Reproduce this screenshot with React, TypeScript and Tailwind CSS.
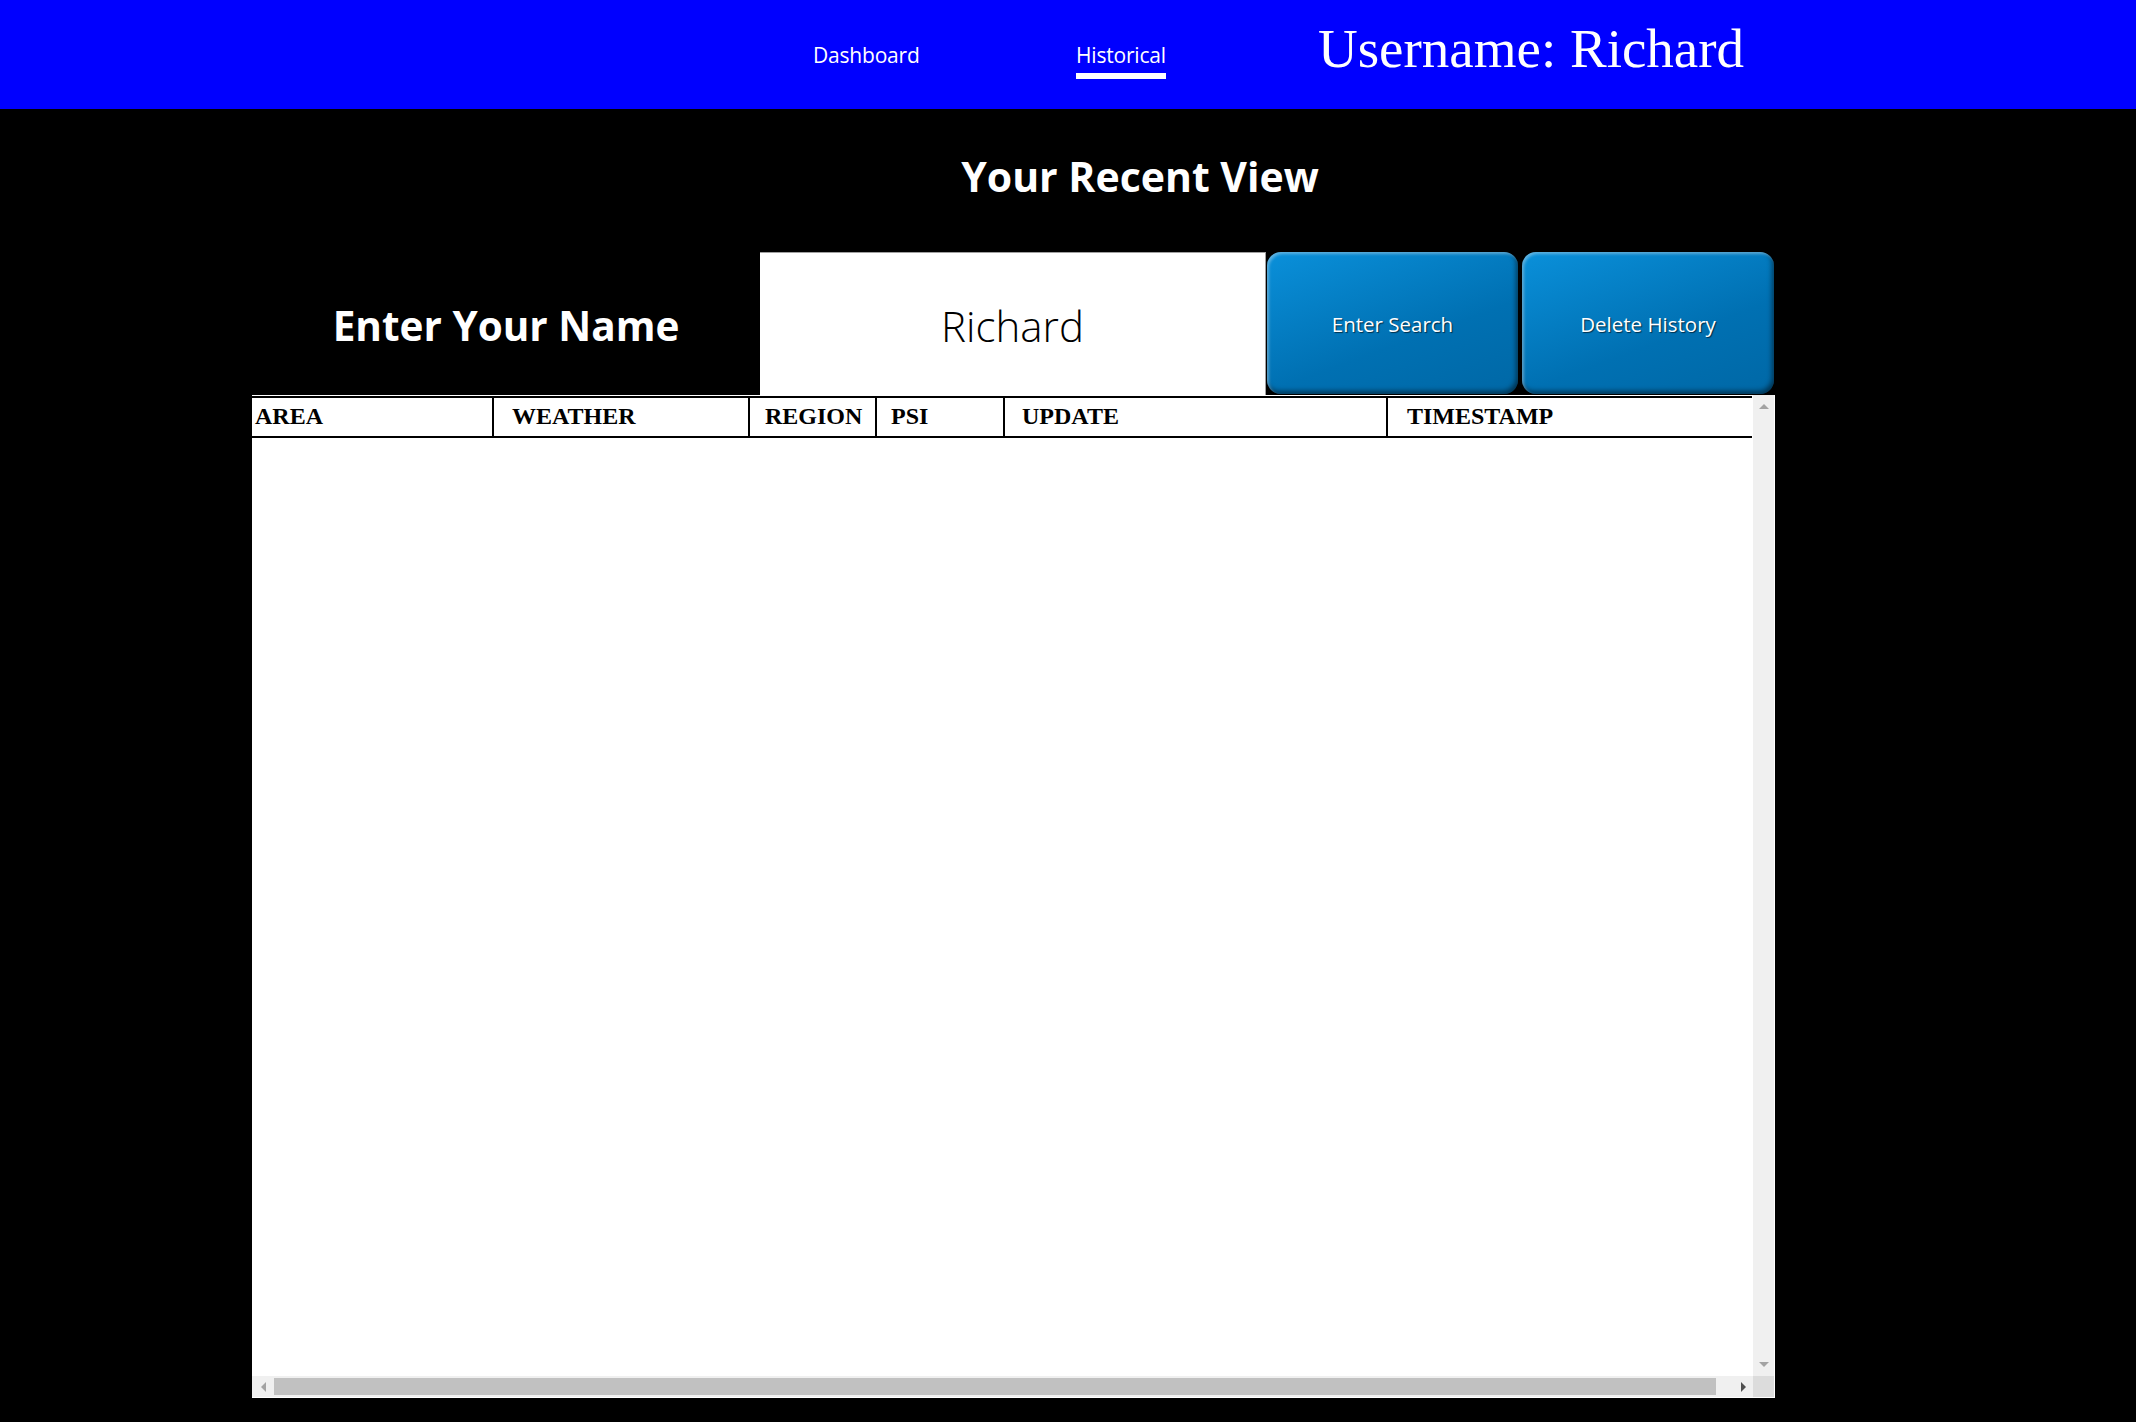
import React from "react";

const sans = "font-['Open_Sans','Noto_Sans',sans-serif]";
const serif = "font-['Liberation_Serif','Times_New_Roman',serif]";

function Th({ w, pl, first, children }: { w: number; pl: number; first?: boolean; children: React.ReactNode }) {
  return (
    <div
      className={`h-[38px] shrink-0 leading-[37px] text-[24px] font-bold text-black ${serif} ${first ? "" : "border-l-2 border-black"}`}
      style={{ width: w, paddingLeft: pl }}
    >
      {children}
    </div>
  );
}

export default function App() {
  return (
    <div className="w-[2136px] h-[1422px] bg-black overflow-hidden">
      {/* Header */}
      <div className="h-[109px] bg-[#0000ff] flex items-start">
        <div className="w-[813px] shrink-0" />
        <div className={`w-[263px] shrink-0 pt-[41px] text-[21px] leading-[28px] tracking-[-0.2px] text-white ${sans}`}>Dashboard</div>
        <div className="w-[242px] shrink-0 pt-[41px]">
          <div className="inline-flex flex-col">
            <span className={`text-[21px] leading-[28px] tracking-[-0.2px] text-white ${sans}`}>Historical</span>
            <span className="mt-[4px] h-[6px] bg-white" />
          </div>
        </div>
        <div className={`pt-[21px] text-[55px] leading-none text-white whitespace-nowrap ${serif}`}>Username: Richard</div>
      </div>

      {/* Main */}
      <div className="ml-[252px] w-[1523px]">
        <div className="mt-[47px] ml-[588px] w-[600px] text-center">
          <h1 className={`text-[41px] leading-none font-bold text-white ${sans}`}>Your Recent View</h1>
        </div>

        <div className="mt-[55px] h-[143px] flex">
          <div className="w-[508px] shrink-0 flex items-center justify-center pt-[6px]">
            <span className={`text-[40.5px] leading-none font-bold text-white whitespace-nowrap ${sans}`}>Enter Your Name</span>
          </div>
          <div className="w-[506px] shrink-0 bg-white border-t border-r border-[#a0a0a0] flex items-center justify-center pt-[4px]">
            <span className={`text-[42px] leading-none font-light text-black ${sans}`}>Richard</span>
          </div>
          <button
            className={`ml-[1px] w-[251px] h-[142px] shrink-0 rounded-[14px] pt-[2px] bg-[linear-gradient(160deg,#0a90da,#0070b2_60%,#0068a6)] shadow-[inset_2px_2px_3px_rgba(255,255,255,0.35),inset_-2px_-3px_5px_rgba(0,0,0,0.5)] text-white text-[20.5px] [text-shadow:1px_1px_1px_rgba(0,0,0,0.6)] ${sans}`}
          >
            Enter Search
          </button>
          <button
            className={`ml-[4px] w-[252px] h-[142px] shrink-0 rounded-[14px] pt-[2px] bg-[linear-gradient(160deg,#0a90da,#0070b2_60%,#0068a6)] shadow-[inset_2px_2px_3px_rgba(255,255,255,0.35),inset_-2px_-3px_5px_rgba(0,0,0,0.5)] text-white text-[20.5px] [text-shadow:1px_1px_1px_rgba(0,0,0,0.6)] ${sans}`}
          >
            Delete History
          </button>
        </div>

        {/* Table */}
        <div className="w-[1523px] h-[1003px] bg-white flex flex-col border-r border-b border-white">
          <div className="flex-1 flex min-h-0">
            <div className="flex-1 overflow-hidden pt-[1px]">
              <div className="flex w-[1500px] border-y-2 border-black">
                <Th w={240} pl={3} first>AREA</Th>
                <Th w={256} pl={18}>WEATHER</Th>
                <Th w={127} pl={15}>REGION</Th>
                <Th w={128} pl={14}>PSI</Th>
                <Th w={383} pl={17}>UPDATE</Th>
                <Th w={366} pl={19}>TIMESTAMP</Th>
              </div>
            </div>
            <div className="w-[21px] shrink-0 bg-[#f0f0f0] flex flex-col items-center justify-between pt-[9px] pb-[9px]">
              <div className="w-0 h-0 border-x-[5px] border-b-[5px] border-x-transparent border-b-[#a3a3a3]" />
              <div className="w-0 h-0 border-x-[5px] border-t-[5px] border-x-transparent border-t-[#a3a3a3]" />
            </div>
          </div>
          <div className="h-[21px] shrink-0 flex">
            <div className="flex-1 bg-[#f0f0f0] flex items-center">
              <div className="w-[22px] shrink-0 flex justify-center">
                <div className="w-0 h-0 border-y-[5px] border-r-[5px] border-y-transparent border-r-[#a3a3a3]" />
              </div>
              <div className="w-[1442px] h-[17px] bg-[#c1c1c1]" />
              <div className="flex-1 flex justify-end pr-[7px]">
                <div className="w-0 h-0 border-y-[5px] border-l-[5px] border-y-transparent border-l-[#505050]" />
              </div>
            </div>
            <div className="w-[21px] shrink-0 bg-[#dcdcdc]" />
          </div>
        </div>
      </div>
    </div>
  );
}
